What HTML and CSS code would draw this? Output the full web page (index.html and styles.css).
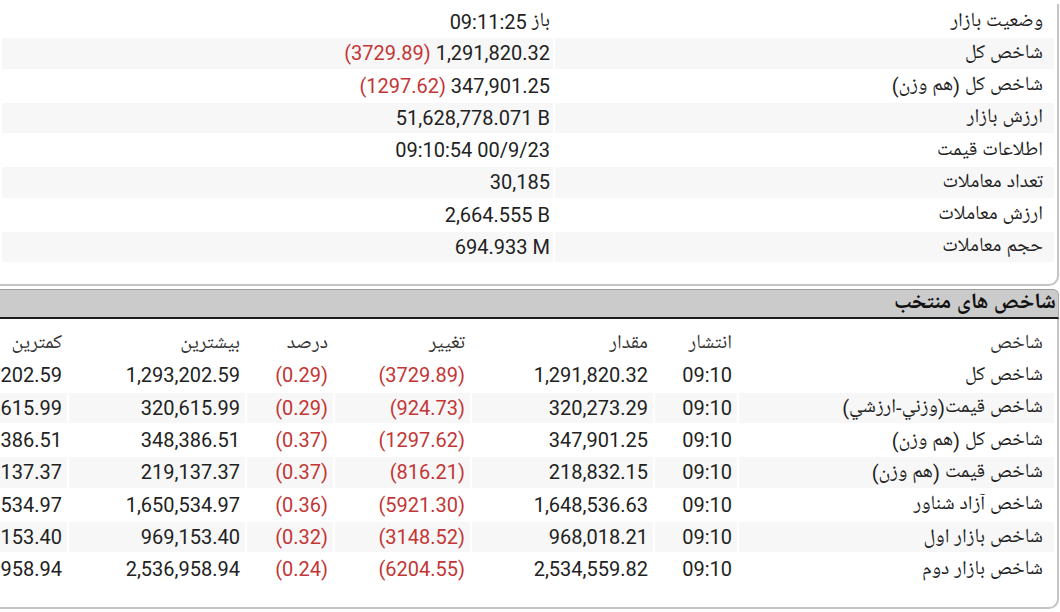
FILE: index.html
```html
<!DOCTYPE html>
<html lang="fa" dir="rtl">
<head>
<meta charset="utf-8">
<title>وضعیت بازار</title>
<link rel="stylesheet" href="styles.css">
</head>
<body>
<div class="page">
  <section class="panel info">
    <table class="kv">
      <colgroup><col class="c-label"><col class="c-value"></colgroup>
      <tbody>
        <tr><td class="lbl">وضعیت بازار</td><td class="val">09:11:25 باز</td></tr>
        <tr><td class="lbl">شاخص کل</td><td class="val"><span class="neg">(3729.89)</span> 1,291,820.32</td></tr>
        <tr><td class="lbl">شاخص کل (هم وزن)</td><td class="val"><span class="neg">(1297.62)</span> 347,901.25</td></tr>
        <tr><td class="lbl">ارزش بازار</td><td class="val">51,628,778.071 B</td></tr>
        <tr><td class="lbl">اطلاعات قیمت</td><td class="val">09:10:54 00/9/23</td></tr>
        <tr><td class="lbl">تعداد معاملات</td><td class="val">30,185</td></tr>
        <tr><td class="lbl">ارزش معاملات</td><td class="val">2,664.555 B</td></tr>
        <tr><td class="lbl">حجم معاملات</td><td class="val">694.933 M</td></tr>
      </tbody>
    </table>
  </section>

  <div class="bar">شاخص های منتخب</div>

  <section class="panel indices">
    <table class="grid">
      <colgroup>
        <col class="g-name"><col class="g-time"><col class="g-value"><col class="g-change"><col class="g-pct"><col class="g-high"><col class="g-low">
      </colgroup>
      <thead>
        <tr><th class="name">شاخص</th><th>انتشار</th><th>مقدار</th><th>تغییر</th><th>درصد</th><th>بیشترین</th><th>کمترین</th></tr>
      </thead>
      <tbody>
        <tr><td class="name">شاخص کل</td><td class="num">09:10</td><td class="num">1,291,820.32</td><td class="num neg">(3729.89)</td><td class="num neg">(0.29)</td><td class="num">1,293,202.59</td><td class="num">1,293,202.59</td></tr>
        <tr><td class="name">شاخص قيمت(وزني-ارزشي)</td><td class="num">09:10</td><td class="num">320,273.29</td><td class="num neg">(924.73)</td><td class="num neg">(0.29)</td><td class="num">320,615.99</td><td class="num">320,615.99</td></tr>
        <tr><td class="name">شاخص کل (هم وزن)</td><td class="num">09:10</td><td class="num">347,901.25</td><td class="num neg">(1297.62)</td><td class="num neg">(0.37)</td><td class="num">348,386.51</td><td class="num">348,386.51</td></tr>
        <tr><td class="name">شاخص قيمت (هم وزن)</td><td class="num">09:10</td><td class="num">218,832.15</td><td class="num neg">(816.21)</td><td class="num neg">(0.37)</td><td class="num">219,137.37</td><td class="num">219,137.37</td></tr>
        <tr><td class="name">شاخص آزاد شناور</td><td class="num">09:10</td><td class="num">1,648,536.63</td><td class="num neg">(5921.30)</td><td class="num neg">(0.36)</td><td class="num">1,650,534.97</td><td class="num">1,650,534.97</td></tr>
        <tr><td class="name">شاخص بازار اول</td><td class="num">09:10</td><td class="num">968,018.21</td><td class="num neg">(3148.52)</td><td class="num neg">(0.32)</td><td class="num">969,153.40</td><td class="num">969,153.40</td></tr>
        <tr><td class="name">شاخص بازار دوم</td><td class="num">09:10</td><td class="num">2,534,559.82</td><td class="num neg">(6204.55)</td><td class="num neg">(0.24)</td><td class="num">2,536,958.94</td><td class="num">2,536,958.94</td></tr>
      </tbody>
    </table>
  </section>
</div>
</body>
</html>
```
FILE: styles.css
```css
* { box-sizing: border-box; }

html, body {
  margin: 0;
  padding: 0;
  background: #fff;
}

body {
  direction: rtl;
  font-family: Roboto, "Noto Naskh Arabic UI", "Noto Naskh Arabic", "Noto Sans Arabic", "DejaVu Sans", sans-serif;
  color: #222;
  width: 1060px;
  height: 612px;
  overflow: hidden;
}

.page {
  width: 1060px;
  height: 612px;
  overflow: hidden;
  padding-top: 4px;
}

.panel {
  width: 1140px;
  margin-right: 1px;
  padding-right: 1px;
  border-right: 2px solid #c4c4c4;
  border-bottom: 2px solid #c4c4c4;
  border-bottom-right-radius: 10px;
  background: #fff;
}

.info { padding-bottom: 20px; }
.indices { padding-top: 7px; padding-bottom: 20px; }

table {
  border-collapse: separate;
  border-spacing: 2px;
  table-layout: fixed;
}

.kv { width: 1056px; margin-left: auto; }
.c-label { width: 499px; }
.c-value { width: 551px; }

.kv td {
  height: 30.25px;
  padding: 0;
  white-space: nowrap;
  vertical-align: middle;
}
.kv tr:nth-child(even) td { background: #f7f7f7; }

.kv .lbl {
  font-size: 20px;
  text-align: right;
  padding-right: 11px;
}
.kv .val {
  direction: ltr;
  text-align: right;
  font-size: 20px;
  padding-right: 3px;
}

.neg { color: #c33636; }

.bar {
  margin-top: 3px;
  margin-right: 1px;
  height: 30px;
  background: #cbcbcb;
  border-top: 1px solid #9c9c9c;
  border-right: 1px solid #a8a8a8;
  border-bottom: 2px solid #1c1c1c;
  border-top-right-radius: 6px;
  font-size: 22px;
  font-weight: bold;
  color: #111;
  line-height: 27px;
  padding-right: 2px;
  white-space: nowrap;
}

.grid { width: 1118px; margin-left: auto; }
.g-name { width: 315px; }
.g-time { width: 82px; }
.g-value { width: 181px; }
.g-change { width: 135px; }
.g-pct { width: 86px; }
.g-high { width: 176px; }
.g-low { width: 127px; }

.grid th, .grid td {
  height: 30.33px;
  padding: 0 5px 0 0;
  white-space: nowrap;
  overflow: hidden;
  vertical-align: middle;
  text-align: right;
}
.grid th {
  font-weight: normal;
  font-size: 20px;
  color: #333;
}
.grid .name {
  font-size: 20px;
  padding-right: 11px;
}
.grid .num {
  direction: ltr;
  font-size: 20px;
}
.grid tbody tr:nth-child(even) td { background: #f7f7f7; }
```
